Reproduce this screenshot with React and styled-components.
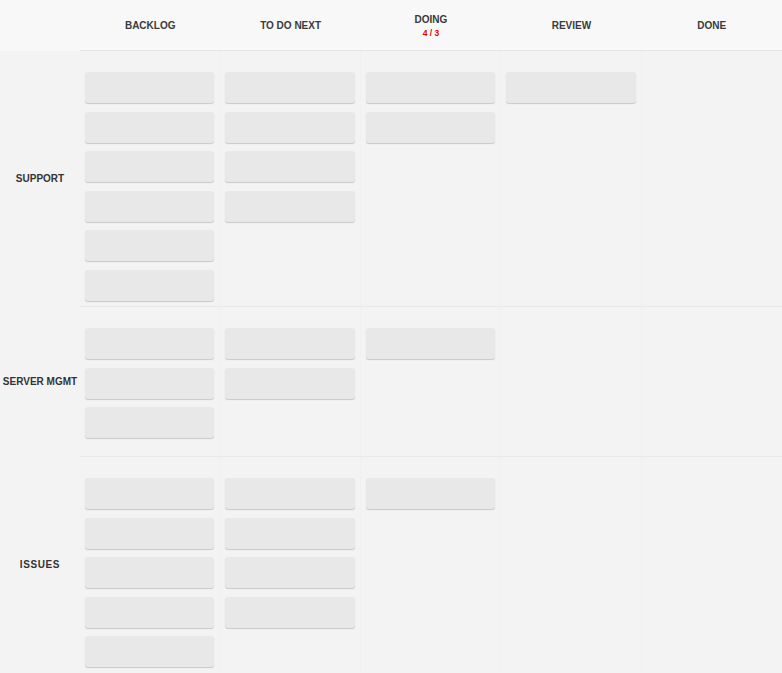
import styled, { createGlobalStyle } from 'styled-components'

const GlobalStyle = createGlobalStyle`
    html, body {
        margin: 0;
        padding: 0;
        background: #f3f3f3;
        font-family: "Liberation Sans", Arial, sans-serif;
    }
`

const Board = styled.div`
    width: 782px;
    min-height: 673px;
    background: #f3f3f3;
`
const Header = styled.div`
    height: 51px;
    display: grid;
    grid-template-columns: 80px repeat(5, 1fr);
    background: #f8f8f8;
`
const HeaderCell = styled.div`
    display: flex;
    flex-flow: column nowrap;
    justify-content: center;
    align-items: center;
    padding-top: 1px;
    border-bottom: ${p => (p.blank ? 'none' : '1px solid #e6e6e6')};
    color: #3a3a3a;
    font-size: 10px;
    font-weight: bold;
`
const Limit = styled.span`
    color: #e60000;
    font-size: 8.5px;
    font-weight: bold;
    margin-top: 3px;
`
const Lane = styled.div`
    display: grid;
    grid-template-columns: 80px repeat(5, 1fr);
    min-height: 150px;
`
const LaneLabel = styled.div`
    display: flex;
    align-items: center;
    justify-content: center;
    color: #333;
    font-size: 10px;
    font-weight: bold;
    letter-spacing: ${p => (p.spaced ? '0.6px' : '0')};
    white-space: nowrap;
`
const Cell = styled.div`
    box-sizing: border-box;
    padding: 21px 5px 5px 5px;
    display: flex;
    flex-flow: column nowrap;
    gap: 8.6px;
    border-right: 1px solid #f0f0f0;
    border-bottom: ${p => (p.last ? 'none' : '1px solid #e8e8e8')};
    &:last-child {
        border-right: none;
    }
`
const Card = styled.div`
    height: 31px;
    background: #e8e8e8;
    border-radius: 3px;
    box-shadow: 0 1px 1px rgba(0, 0, 0, 0.18);
`

const columns = [
    { name: 'BACKLOG' },
    { name: 'TO DO NEXT' },
    { name: 'DOING', limit: '4 / 3' },
    { name: 'REVIEW' },
    { name: 'DONE' },
]

const lanes = [
    { name: 'SUPPORT', cards: [6, 4, 2, 1, 0] },
    { name: 'SERVER MGMT', cards: [3, 2, 1, 0, 0] },
    { name: 'ISSUES', cards: [5, 4, 1, 0, 0], spaced: true },
]

const App = () => {
    return (
        <Board>
            <GlobalStyle />
            <Header>
                <HeaderCell blank />
                {columns.map(col => (
                    <HeaderCell key={col.name}>
                        {col.name}
                        {col.limit && <Limit>{col.limit}</Limit>}
                    </HeaderCell>
                ))}
            </Header>
            {lanes.map((lane, n) => (
                <Lane key={lane.name}>
                    <LaneLabel spaced={lane.spaced}>{lane.name}</LaneLabel>
                    {lane.cards.map((count, i) => (
                        <Cell key={i} last={n === lanes.length - 1}>
                            {Array.from({ length: count }).map((_, j) => <Card key={j} />)}
                        </Cell>
                    ))}
                </Lane>
            ))}
        </Board>
    )
}

export default App
